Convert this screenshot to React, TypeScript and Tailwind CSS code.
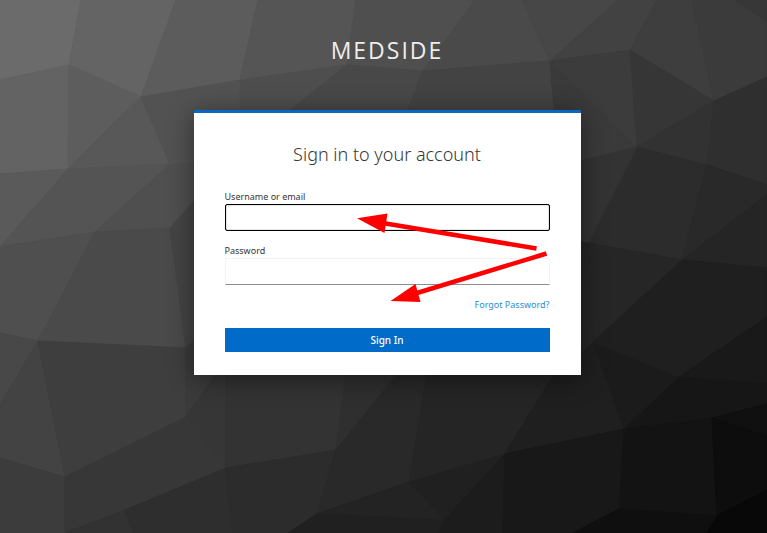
import { useState } from "react";

// [points, fill] of each facet, drawn on a 767x533 canvas
const FACETS: [string, string][] = [
  ["0,0 81,0 69,65 0,80", "#6b6b6b"],
  ["81,0 176,0 141,97 69,65", "#646464"],
  ["176,0 258,0 240,80 141,97", "#5c5c5c"],
  ["258,0 356,0 347,65 240,80", "#555555"],
  ["356,0 475,0 423,71 347,65", "#4f4f4f"],
  ["475,0 522,0 550,61 423,71", "#4a4a4a"],
  ["522,0 618,0 550,61", "#474747"],
  ["618,0 657,0 630,50 550,61", "#424242"],
  ["657,0 692,0 714,101 630,50", "#3e3e3e"],
  ["692,0 735,0 767,22 767,77 714,101", "#3b3b3b"],
  ["735,0 767,0 767,22", "#373737"],
  ["0,80 69,65 68,169 0,174", "#636363"],
  ["69,65 141,97 68,169", "#5d5d5d"],
  ["141,97 170,164 68,169", "#585858"],
  ["141,97 240,80 240,163 170,164", "#525252"],
  ["240,80 347,65 280,118 240,163", "#4e4e4e"],
  ["347,65 423,71 400,130 280,118", "#484848"],
  ["423,71 550,61 555,120 400,130", "#434343"],
  ["550,61 630,50 637,147", "#3c3c3c"],
  ["550,61 637,147 580,161 555,120", "#3a3a3a"],
  ["630,50 714,101 637,147", "#363636"],
  ["714,101 707,165 637,147", "#323232"],
  ["714,101 767,77 767,185 707,165", "#2f2f2f"],
  ["0,174 68,169 0,247", "#5a5a5a"],
  ["68,169 170,164 95,232 0,247", "#545454"],
  ["170,164 240,163 170,228 95,232", "#4f4f4f"],
  ["0,247 95,232 38,341 0,333", "#4f4f4f"],
  ["95,232 170,228 186,348 38,341", "#4a4a4a"],
  ["170,228 240,260 240,300 186,348", "#444444"],
  ["170,228 240,150 240,260", "#454545"],
  ["0,333 38,341 0,405", "#484848"],
  ["0,405 38,341 65,477 0,458", "#434343"],
  ["38,341 186,348 186,417 65,477", "#3e3e3e"],
  ["186,348 240,300 215,375 186,417", "#3b3b3b"],
  ["0,458 65,477 65,533 0,533", "#3c3c3c"],
  ["65,477 186,417 226,468 125,510 65,533", "#373737"],
  ["186,417 215,375 226,360 226,468", "#363636"],
  ["65,533 125,510 133,533", "#323232"],
  ["125,510 226,468 233,533 133,533", "#2e2e2e"],
  ["226,340 350,340 336,450 226,468", "#333333"],
  ["350,340 424,340 336,450", "#2f2f2f"],
  ["226,468 336,450 317,514 288,533 233,533", "#2c2c2c"],
  ["336,450 424,340 432,340 409,482 317,514", "#292929"],
  ["432,340 575,340 505,454 409,482", "#252525"],
  ["409,482 445,520 317,514", "#232323"],
  ["317,514 445,520 438,533 288,533", "#202020"],
  ["409,482 505,454 445,520", "#202020"],
  ["505,454 503,533 438,533 445,520", "#1c1c1c"],
  ["575,340 593,342 624,429 505,454", "#1f1f1f"],
  ["505,454 624,429 619,509 573,533 503,533", "#181818"],
  ["593,342 679,377 624,429", "#1b1b1b"],
  ["679,377 767,383 767,404 712,418 624,429", "#161616"],
  ["624,429 712,418 717,516 619,509", "#131313"],
  ["712,418 767,404 767,436", "#101010"],
  ["712,418 767,436 767,490 717,516", "#0d0d0d"],
  ["717,516 767,490 767,533 705,533", "#080808"],
  ["619,509 717,516 705,533 573,533", "#0f0f0f"],
  ["637,147 707,165 682,260 588,243", "#2c2c2c"],
  ["560,120 580,161 637,147 588,243 560,260", "#333333"],
  ["707,165 767,185 767,195 682,260", "#292929"],
  ["682,260 767,195 767,268", "#252525"],
  ["588,243 682,260 593,342", "#262626"],
  ["560,238 588,243 593,342 560,370", "#262626"],
  ["682,260 767,268 767,317 679,377 593,342", "#1f1f1f"],
  ["679,377 767,317 767,383", "#191919"],
];

const Background = () => (
  <svg
    className="absolute inset-0 h-full w-full"
    viewBox="0 0 767 533"
    preserveAspectRatio="xMidYMid slice"
    aria-hidden="true"
  >
    {FACETS.map(([points, fill]) => (
      <polygon key={points} points={points} fill={fill} stroke={fill} />
    ))}
  </svg>
);

// Red pointers towards the two text boxes
const Arrows = () => (
  <svg
    className="pointer-events-none absolute right-[33px] top-[98px]"
    width="192"
    height="92"
    viewBox="356 211 192 92"
    fill="#ff0000"
    stroke="#ff0000"
    aria-hidden="true"
  >
    <path d="M384 223.2 536.5 248.5" strokeWidth="4.5" />
    <path d="M357 218.3 387.5 213.5 384.5 233Z" stroke="none" />
    <path d="M417 293 546.5 253.5" strokeWidth="4.5" />
    <path d="M390.5 301 415.5 284 420.5 302Z" stroke="none" />
  </svg>
);

const LoginForm = () => {
  const [username, setUsername] = useState("");
  const [password, setPassword] = useState("");

  return (
    <form onSubmit={(e) => e.preventDefault()}>
      <label htmlFor="username" className="block text-[9px] leading-[15px]">
        Username or email
      </label>
      <input
        id="username"
        type="text"
        className="block h-[27px] w-full rounded-[2px] border border-black bg-white px-2 text-xs shadow-[inset_0_0_1px_#000] outline-none"
        value={username}
        onChange={(e) => setUsername(e.target.value)}
      />
      <label
        htmlFor="password"
        className="mt-3 block text-[9px] leading-[15px]"
      >
        Password
      </label>
      <input
        id="password"
        type="password"
        className="block h-[27px] w-full border border-[#f3f3f3] border-b-[#8b8d8f] bg-white px-2 text-xs outline-none"
        value={password}
        onChange={(e) => setPassword(e.target.value)}
      />
      <div className="mt-3 flex justify-end text-[9px] leading-[15px]">
        <a href="#reset" className="text-[#1f8fd0]">
          Forgot Password?
        </a>
      </div>
      <button
        type="submit"
        className="mt-4 block h-6 w-full bg-[#006bc8] text-[10px] font-medium text-white"
      >
        Sign In
      </button>
    </form>
  );
};

const App = () => {
  return (
    <div className="relative min-h-screen overflow-hidden bg-[#2b2b2b] font-['Noto_Sans',sans-serif] text-[#363636]">
      <Background />
      <div className="relative flex flex-col items-center pl-[7px]">
        <header className="pb-[45px] pt-[35px] font-['Open_Sans',sans-serif] text-[23px] leading-[30px] tracking-[2px] text-[#ededed]">
          MEDSIDE
        </header>
        <main className="relative w-full max-w-[387px] border-t-[3px] border-[#0b66bd] bg-white px-[31px] pb-[23px] pt-[27px] shadow-[0_4px_24px_rgba(0,0,0,0.45)]">
          <h1 className="mb-[21px] text-center text-lg font-light leading-7">
            Sign in to your account
          </h1>
          <LoginForm />
          <Arrows />
        </main>
      </div>
    </div>
  );
};

export default App;
